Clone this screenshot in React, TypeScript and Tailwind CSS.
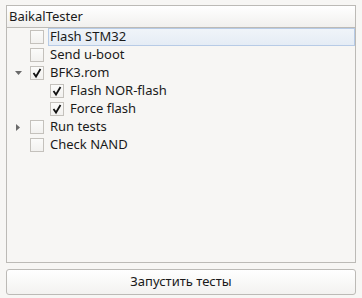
import React from "react";

type Row = { label: string; level: number; checked: boolean; arrow?: "down" | "right"; selected?: boolean };

const rows: Row[] = [
  { label: "Flash STM32", level: 0, checked: false, selected: true },
  { label: "Send u-boot", level: 0, checked: false },
  { label: "BFK3.rom", level: 0, checked: true, arrow: "down" },
  { label: "Flash NOR-flash", level: 1, checked: true },
  { label: "Force flash", level: 1, checked: true },
  { label: "Run tests", level: 0, checked: false, arrow: "right" },
  { label: "Check NAND", level: 0, checked: false },
];

function Box({ checked }: { checked: boolean }) {
  return (
    <div className="w-[14px] h-[14px] border border-[#c4c1bc] bg-gradient-to-b from-[#fbfbfa] to-[#f2f1ef] flex items-center justify-center shrink-0">
      {checked && (
        <svg width="12" height="12" viewBox="0 0 12 12">
          <path d="M2.5 6 L5 9.5 L9.5 2" stroke="#111" strokeWidth="1.8" fill="none" />
        </svg>
      )}
    </div>
  );
}

export default function App() {
  return (
    <div
      className="w-[362px] h-[298px] bg-[#f7f6f4] flex flex-col px-[6px] pt-[5px] pb-[3px] text-[13px] text-[#1a1a1a]"
      style={{ fontFamily: '"Noto Sans", sans-serif' }}
    >
      <div className="flex-1 border border-[#bcbab6] flex flex-col">
        <div className="h-[22px] border-b border-[#bcbab6] bg-gradient-to-b from-white to-[#f1f0ee] flex items-center pl-[2px] leading-none">
          BaikalTester
        </div>
        <div className="flex flex-col">
          {rows.map((r) => (
            <div key={r.label} className="h-[18px] flex items-center">
              <div className="w-[6px] shrink-0" />
              <div className="w-[10px] shrink-0 flex items-center justify-center">
                {r.level === 0 && r.arrow === "down" && (
                  <svg width="7" height="5" viewBox="0 0 7 5">
                    <path d="M0 0 H7 L3.5 4 Z" fill="#6a6a6a" />
                  </svg>
                )}
                {r.level === 0 && r.arrow === "right" && (
                  <svg width="5" height="7" viewBox="0 0 5 7">
                    <path d="M0 0 V7 L4 3.5 Z" fill="#6a6a6a" />
                  </svg>
                )}
              </div>
              {r.level === 1 && <div className="w-[20px] shrink-0" />}
              <div className="ml-[7px]">
                <Box checked={r.checked} />
              </div>
              <div
                className={
                  "ml-[4px] h-[18px] flex-1 flex items-center pl-[1px] " +
                  (r.selected ? "bg-gradient-to-b from-[#f0f4f9] to-[#e5ecf5] border border-[#b7cbe6]" : "border border-transparent")
                }
              >
                {r.label}
              </div>
            </div>
          ))}
        </div>
      </div>
      <button className="mt-[6px] h-[26px] rounded-[3px] border border-[#bcbab6] bg-gradient-to-b from-white to-[#f3f2f0] flex items-center justify-center">
        Запустить тесты
      </button>
    </div>
  );
}
